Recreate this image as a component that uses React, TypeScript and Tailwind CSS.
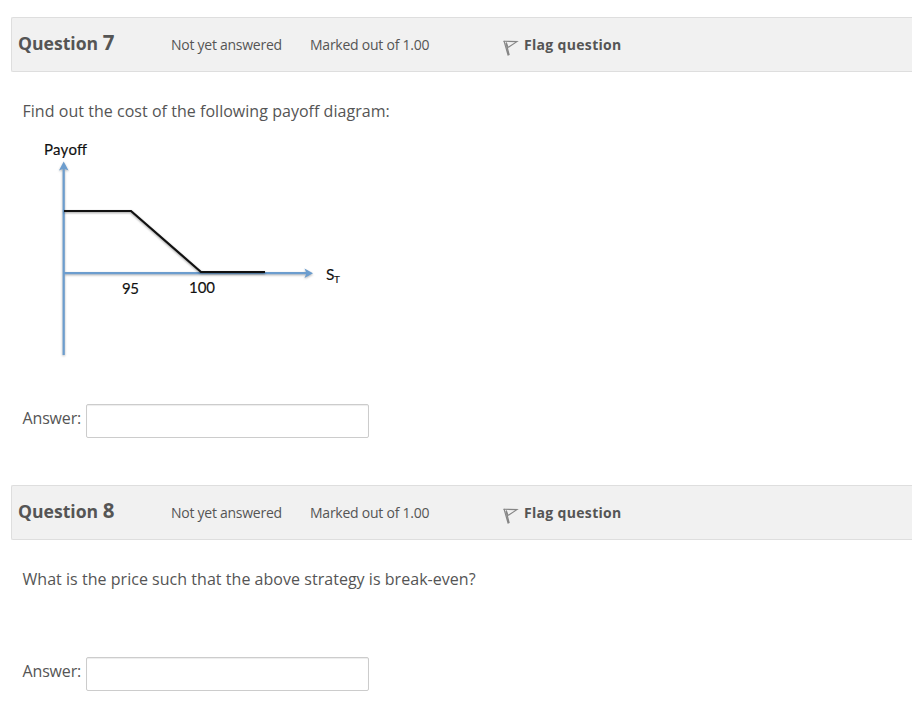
import React from "react";

function Flag() {
  return (
    <svg className="mt-[7px]" width="16" height="18" viewBox="0 0 16 18" fill="none" stroke="#858585" strokeWidth="1.1">
      <path d="M1 1.8L5.2 16.6M3.1 4L6.2 16.2" strokeWidth="1.2" />
      <path d="M.5 2.2L14 2.6L5 8.5L3.3 3.3" />
    </svg>
  );
}

function QuestionHeader({ number }: { number: string }) {
  return (
    <header className="ml-[11px] flex h-[55px] items-center rounded-l-[2px] border border-r-0 border-[#dedede] bg-[#f1f1f1] pl-[6px]">
      <h3 className="-mt-1 w-[153px] text-[17.6px] leading-none font-bold">
        Question <span className="text-[20.5px]">{number}</span>
      </h3>
      <span className="w-[139px] text-[14px] tracking-[-0.26px]">Not yet answered</span>
      <span className="w-[192.5px] text-[14px] tracking-[-0.24px]">Marked out of 1.00</span>
      <Flag />
      <span className="ml-[5.5px] text-[14px] font-bold tracking-[0.32px]">Flag question</span>
    </header>
  );
}

function Answer() {
  return (
    <label className="ml-[22.5px] flex h-[34px] items-center text-[16px]">
      <span className="-mt-1.5 w-[63.5px] tracking-[-0.15px]">Answer:</span>
      <input className="h-[34px] w-[283px] rounded-[2px] border border-[#ccc] bg-white shadow-[inset_0_1px_1px_rgba(0,0,0,0.075)]" />
    </label>
  );
}

function Payoff() {
  return (
    <svg className="mt-[12px] ml-[23px]" width="340" height="226" viewBox="23 135 340 226" fill="none">
      <g className="drop-shadow-[0_1px_1px_rgba(0,0,0,0.3)]">
        <path d="M63.7 355V166M64 273.2H308" stroke="#6c9dce" strokeWidth="2.2" />
        <path d="M59 170.5L63.7 161.5L68.5 170.5L63.7 168.5ZM304.5 268.5L313 273.2L304.5 278L306.5 273.2Z" fill="#6c9dce" />
      </g>
      <path className="drop-shadow-[0_1px_1px_rgba(0,0,0,0.4)]" d="M64 211H131L201 272H265" stroke="#111" strokeWidth="2.2" />
      <g fill="#111" stroke="#111" strokeWidth=".15" fontFamily="Lato, sans-serif" fontSize="15">
        <text x="44" y="155" textLength="43">Payoff</text>
        <text x="122" y="294" textLength="17">95</text>
        <text x="189" y="293" textLength="26">100</text>
        <text x="326" y="279.5" fontSize="15.5">S</text>
        <text x="334" y="283" fontSize="10">T</text>
      </g>
    </svg>
  );
}

export default function App() {
  return (
    <main className="h-[703px] w-full overflow-hidden bg-white pt-[17px] font-['Open_Sans',sans-serif] text-[#555]">
      <section className="h-[468px]">
        <QuestionHeader number="7" />
        <p className="mt-[27px] ml-[22.5px] text-[16px] leading-6 tracking-[0.035px]">Find out the cost of the following payoff diagram:</p>
        <Payoff />
        <div className="mt-[43px]"><Answer /></div>
      </section>
      <section>
        <QuestionHeader number="8" />
        <p className="mt-[27px] ml-[22.5px] text-[16px] leading-6 tracking-[0.035px]">What is the price such that the above strategy is break-even?</p>
        <div className="mt-[66px]"><Answer /></div>
      </section>
    </main>
  );
}
